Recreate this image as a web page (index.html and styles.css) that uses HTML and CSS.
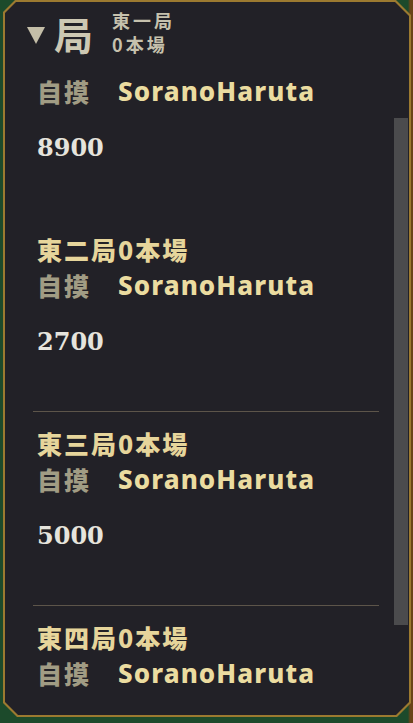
FILE: index.html
```html
<!DOCTYPE html>
<html lang="ja">
<head>
<meta charset="utf-8">
<link rel="stylesheet" href="styles.css">
</head>
<body>
<div class="frame">
  <div class="panel">
    <div class="header">
      <svg class="tri" width="18" height="17" viewBox="0 0 18 17"><polygon points="0,0 18,0 9,17" fill="#c4bea8"/></svg>
      <span class="kyoku">局</span>
      <div class="sub">
        <div>東一局</div>
        <div>0本場</div>
      </div>
    </div>
    <div class="body">
      <div class="list">
        <div class="entry first">
          <div class="act"><span class="type">自摸</span><span class="name">SoranoHaruta</span></div>
          <div class="score">8900</div>
        </div>
        <div class="entry">
          <div class="title">東二局0本場</div>
          <div class="act"><span class="type">自摸</span><span class="name">SoranoHaruta</span></div>
          <div class="score">2700</div>
        </div>
        <div class="entry">
          <div class="title">東三局0本場</div>
          <div class="act"><span class="type">自摸</span><span class="name">SoranoHaruta</span></div>
          <div class="score">5000</div>
        </div>
        <div class="entry">
          <div class="title">東四局0本場</div>
          <div class="act"><span class="type">自摸</span><span class="name">SoranoHaruta</span></div>
        </div>
      </div>
      <div class="track"><div class="thumb"></div></div>
    </div>
  </div>
</div>
</body>
</html>
```

FILE: styles.css
```css
html, body {
  margin: 0;
  padding: 0;
}
body {
  width: 413px;
  height: 723px;
  background: linear-gradient(90deg, #1c4a2b 0, #1c4a2b 408px, #6a4418 410px, #6a4418 413px);
  overflow: hidden;
  font-family: "Noto Sans CJK JP", "Noto Sans", sans-serif;
}
.frame {
  margin-left: 3px;
  width: 408px;
  height: 717px;
  padding: 2px;
  box-sizing: border-box;
  background: #9c7a30;
  clip-path: polygon(12px 0, calc(100% - 15px) 0, 100% 15px, 100% calc(100% - 14px), calc(100% - 14px) 100%, 14px 100%, 0 calc(100% - 14px), 0 12px);
}
.panel {
  height: 100%;
  background: #222127;
  overflow: hidden;
  clip-path: polygon(11px 0, calc(100% - 14px) 0, 100% 14px, 100% calc(100% - 13px), calc(100% - 13px) 100%, 13px 100%, 0 calc(100% - 13px), 0 11px);
}
.header {
  height: 58px;
  box-sizing: border-box;
  padding: 4px 0 0 22px;
  display: flex;
  align-items: center;
  font-weight: 700;
}
.tri {
  display: block;
  margin-top: 4px;
}
.kyoku {
  margin-left: 9px;
  font-size: 39px;
  line-height: 44px;
  color: #cdc8b3;
}
.sub {
  margin-left: 19px;
  font-size: 18px;
  line-height: 24px;
  letter-spacing: 3px;
  color: #c6c1ad;
  margin-top: -2px;
}
.body {
  display: flex;
  height: 655px;
}
.list {
  flex: 1;
  padding: 0 15px 0 28px;
}
.entry {
  padding: 13px 0 51px 4px;
  border-bottom: 1px solid #5d554a;
}
.entry.first {
  border-bottom-color: transparent;
}
.title {
  font-size: 25px;
  line-height: 36px;
  font-weight: 900;
  letter-spacing: 2px;
  color: #e6d59b;
}
.act {
  display: flex;
  align-items: center;
  height: 36px;
}
.type {
  font-size: 25px;
  font-weight: 900;
  letter-spacing: 2px;
  color: #a19c84;
  width: 81px;
}
.name {
  font-family: "Noto Sans", sans-serif;
  font-size: 26px;
  font-weight: 800;
  letter-spacing: 1.1px;
  color: #ebdca0;
}
.score {
  margin-top: 21px;
  height: 36px;
  line-height: 36px;
  font-family: "DejaVu Serif", serif;
  font-weight: 700;
  font-size: 24px;
  color: #e6e4dc;
}
.track {
  width: 14px;
  margin-right: 1px;
}
.thumb {
  margin-top: 58px;
  height: 507px;
  background: #4b4b4d;
}
```
